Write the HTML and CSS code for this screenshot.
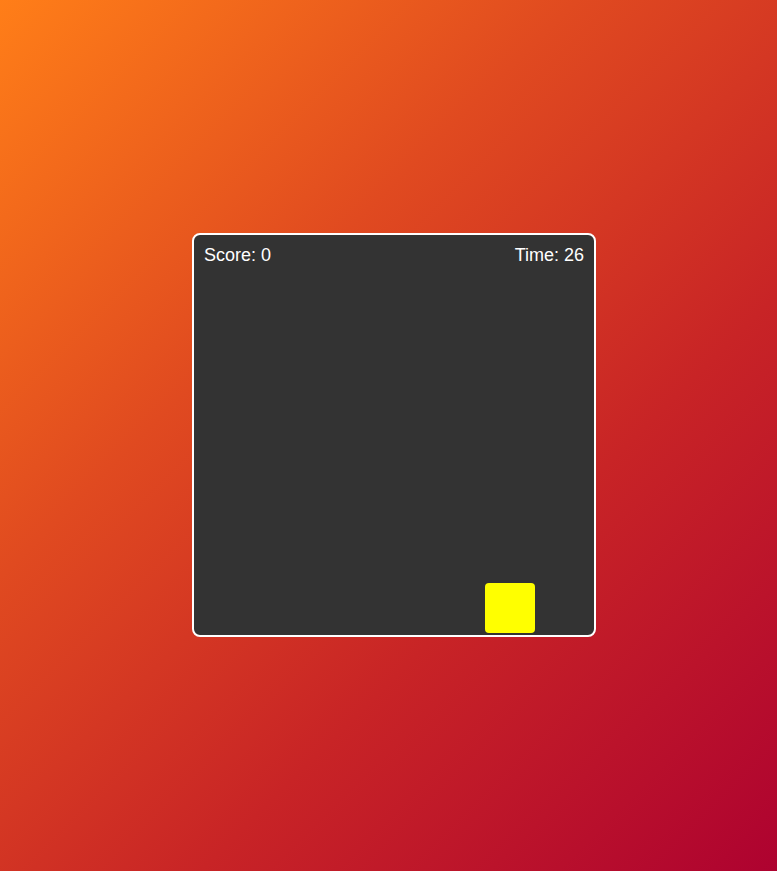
FILE: index.html
```html
<!DOCTYPE html>
<html>
<head>
<meta charset="utf-8">
<link rel="stylesheet" href="styles.css">
</head>
<body>
<div class="game">
  <div class="hud">
    <span class="score">Score: 0</span>
    <span class="time">Time: 26</span>
  </div>
  <div class="player"></div>
</div>
</body>
</html>
```
FILE: styles.css
```css
html, body {
  margin: 0;
  padding: 0;
  height: 100%;
}
body {
  background: linear-gradient(135deg, #ff7e18 0%, #e04a20 35%, #c82426 65%, #ae0230 100%);
  display: flex;
  justify-content: center;
  align-items: center;
  padding-left: 11px;
  box-sizing: border-box;
  font-family: "Liberation Sans", Arial, sans-serif;
}
.game {
  position: relative;
  width: 400px;
  height: 400px;
  background: #333333;
  border: 2px solid #ffffff;
  border-radius: 8px;
  margin-top: -1px;
}
.hud {
  display: flex;
  justify-content: space-between;
  padding: 10px 10px 0 10px;
  color: #ffffff;
  font-size: 18px;
  line-height: 21px;
}
.player {
  position: absolute;
  left: 291px;
  top: 348px;
  width: 50px;
  height: 50px;
  background: #ffff00;
  border-radius: 4px;
}
```
